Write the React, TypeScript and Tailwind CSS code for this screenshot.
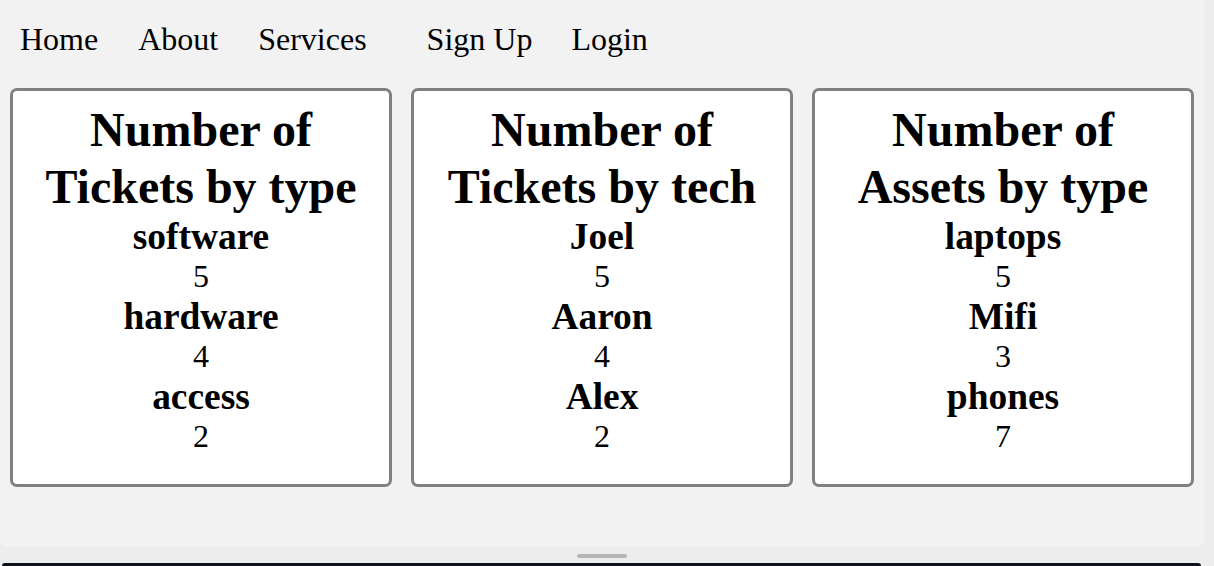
import React from "react";

const cards = [
  {
    title: ["Number of", "Tickets by type"],
    rows: [
      { label: "software", value: 5 },
      { label: "hardware", value: 4 },
      { label: "access", value: 2 },
    ],
  },
  {
    title: ["Number of", "Tickets by tech"],
    rows: [
      { label: "Joel", value: 5 },
      { label: "Aaron", value: 4 },
      { label: "Alex", value: 2 },
    ],
  },
  {
    title: ["Number of", "Assets by type"],
    rows: [
      { label: "laptops", value: 5 },
      { label: "Mifi", value: 3 },
      { label: "phones", value: 7 },
    ],
  },
];

const App: React.FC = () => {
  return (
    <div className="w-[1214px] h-[566px] bg-[#ededed] flex flex-col overflow-hidden font-['Liberation_Serif','Times_New_Roman',serif] text-black">
      {/* page */}
      <div className="w-[1204px] h-[547px] shrink-0 bg-[#f2f2f2] rounded-b-[6px]">
        <nav className="flex pt-[21px] pl-[20px] text-[32px] leading-[36.8px]">
          <a className="mr-[40px]">Home</a>
          <a className="mr-[40px]">About</a>
          <a className="mr-[60px]">Services</a>
          <a className="mr-[39px]">Sign Up</a>
          <a>Login</a>
        </nav>

        <div className="grid grid-cols-3 gap-[19px] px-[10px] mt-[30px]">
          {cards.map((card, i) => (
            <div
              key={i}
              className="h-[399px] bg-white border-[3px] border-[#808080] rounded-[7px] pt-[10px] text-center"
            >
              <h2 className="text-[48px] leading-[57px] font-bold">
                {card.title[0]}
                <br />
                {card.title[1]}
              </h2>
              {card.rows.map((row) => (
                <div key={row.label}>
                  <h3 className="text-[37.44px] leading-[43.2px] font-bold">{row.label}</h3>
                  <p className="text-[32px] leading-[36.8px]">{row.value}</p>
                </div>
              ))}
            </div>
          ))}
        </div>
      </div>

      {/* window footer */}
      <div className="flex-1 flex justify-center pt-[7px] pr-[10px]">
        <div className="w-[50px] h-[4px] rounded-full bg-[#b5b5b5]" />
      </div>
      <div className="h-[3px] mx-[2px] mr-[13px] rounded-t-[3px] bg-[#10111f]" />
    </div>
  );
};

export default App;
